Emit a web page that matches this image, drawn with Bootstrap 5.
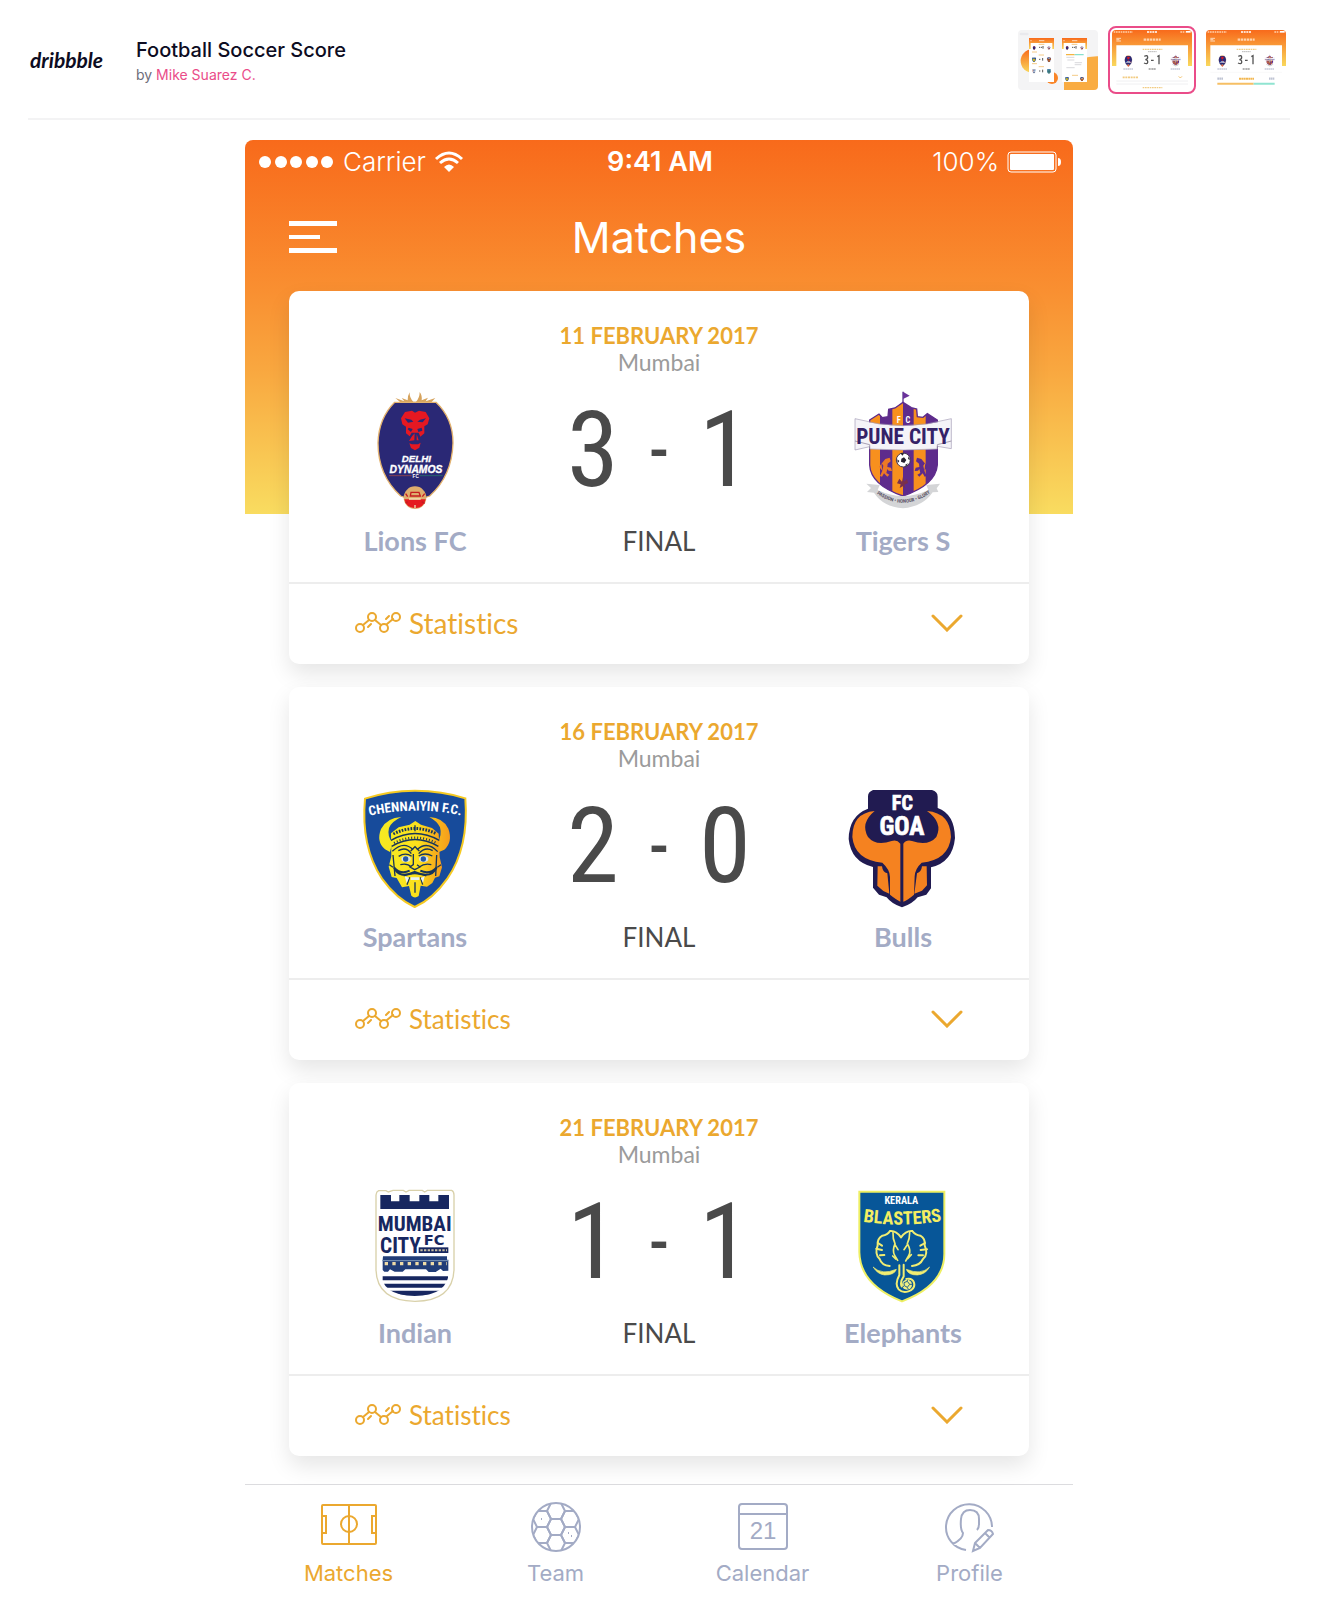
<!DOCTYPE html>
<html lang="en">
<head>
<meta charset="utf-8">
<meta name="viewport" content="width=device-width, initial-scale=1">
<title>Football Soccer Score</title>
<link href="https://cdn.jsdelivr.net/npm/bootstrap@5.3.0/dist/css/bootstrap.min.css" rel="stylesheet">
<style>
  body { font-family: Inter, "Liberation Sans", sans-serif; color: #0d0c22; background: #fff; }
  a { text-decoration: none; }
  .shot-header { margin: 0 28px; padding-top: 2px; height: 120px; border-bottom: 2px solid #f3f3f4; }
  .brand { font: italic 700 21px/24px Lato, sans-serif; color: #0d0c22; width: 108px; padding-left: 2px; }
  .shot-info { padding-top: 4px; }
  .shot-title { font-size: 20px; line-height: 25px; font-weight: 500; }
  .byline { font-size: 14px; line-height: 24px; color: #6e6d7a; }
  .byline a { color: #ea4c89; }
  .thumbs { gap: 6px; }
  .thumb { border: 2px solid transparent; border-radius: 8px; padding: 2px; display: block; }
  .thumb.active { border-color: #ea4c89; }
  .thumb svg { display: block; width: 80px; height: 60px; border-radius: 4px; }
  .phone { max-width: 828px; margin-top: 20px; border-radius: 8px 8px 0 0;
    background: linear-gradient(#f86a1b, #f98f31 40%, #f9a840 62%, #f9dc60) no-repeat 0 0 / 100% 374px; }
  .status { height: 44px; padding: 0 12px 0 14px; font-size: 26px; line-height: 32px; font-weight: 300; }
  .clock { font-weight: 600; font-size: 27px; }
  .side { flex: 1 1 0; }
  .title-bar { height: 107px; padding: 0 44px 2px; }
  .title-bar h1 { font-size: 43px; line-height: 52px; font-weight: 400; }
  .matches { padding: 0 44px 28px; gap: 23px; }
  .match { border: 0; border-radius: 10px; box-shadow: 0 10px 22px rgba(0,0,0,.1); font-family: Lato, sans-serif; }
  .match-head { padding-top: 32px; height: 96px; font-size: 23px; line-height: 26px; color: #9b9b9b; }
  .match-date { color: #eba82f; font-weight: 700; font-size: 22px; }
  .match-body { height: 195px; }
  .crest { width: 114px; height: 127px; display: block; }
  .team { font-size: 27px; line-height: 32px; font-weight: 700; color: #a3abc5; margin-top: 11px; }
  .score { height: 127px; color: #4a4a4a; font: 400 105px/120px "Liberation Sans Narrow", "Roboto Condensed", "Liberation Sans", sans-serif; }
  .score span { width: 66px; text-align: center; }
  .score .dash { font-size: 66px; font-weight: 500; }
  .final { font-size: 26px; line-height: 32px; color: #4a4a4a; margin-top: 11px; }
  .stats { height: 82px; padding: 0 66px 2px; border: 0; border-top: 2px solid #ededed; background: none; color: #eba82f; font-size: 26px; line-height: 32px; font-variant-ligatures: none; }
  .stats.large { font-size: 28px; }
  .tabs { border-top: 1px solid #dcdcdf; padding-top: 16px; }
  .tabs a { color: #a3abc5; font-size: 22px; line-height: 28px; }
  .tabs a.active { color: #eba82f; }
  .tabs svg { width: 56px; height: 52px; margin-bottom: 6px; }
  .ic { fill: none; stroke: currentColor; stroke-width: 2; }
  .lib { font-family: "Liberation Sans", sans-serif; font-weight: 700; }
  .slim { font-family: "Roboto Condensed", "Liberation Sans", sans-serif; font-weight: 700; }
</style>
<script src="https://cdn.jsdelivr.net/npm/bootstrap@5.3.0/dist/js/bootstrap.bundle.min.js"></script>
</head>
<body>
<svg width="0" height="0" class="position-absolute" aria-hidden="true">
  <defs>
    <linearGradient id="sun" x2="0" y2="1"><stop stop-color="#f86a1b"/><stop offset="1" stop-color="#f9d85c"/></linearGradient>
    <linearGradient id="gold"><stop stop-color="#f5ea22"/><stop offset=".55" stop-color="#fbe01c"/><stop offset="1" stop-color="#f59c1c"/></linearGradient>
    <clipPath id="puneClip"><path d="M150 150L178 132 188 143 205 140 207 118 226 114 250 97 275 113 291 117 293 140 310 142 323 131 353 150V285Q348 345 250 378Q153 345 150 285Z"/></clipPath>
    <clipPath id="ballClip"><circle cx="26" cy="26" r="24"/></clipPath>
    <clipPath id="mumClip"><path d="M120 60H328V300Q325 378 224 378Q123 378 120 300Z"/></clipPath>

    <symbol id="lions" viewBox="54 51 342 381">
      <path d="M166 84L193 94 185 84 203 91Q203 76 209 67Q208 84 220 95L228 95Q239 84 239 66Q247 76 245 91L264 83 257 94 286 84 274 97H181Z" fill="#d6a35d"/>
      <path d="M164 97H288Q339 145 339 219Q336 318 269 378Q225 399 182 378Q114 316 114 219Q116 145 164 97Z" fill="#2a2875" stroke="#e4b36f" stroke-width="4"/>
      <path d="M195 126L216 122 225 128 237 122 257 126 268 145 263 163 253 169 253 190 241 200 236 188H215L209 199 198 190 198 170 187 163 183 145Z" fill="#e51822"/>
      <path d="M194 145L214 149 220 155 204 158ZM232 155L240 149 258 145 248 157ZM206 173L218 177 213 186 203 178ZM232 177L245 173 247 182 235 186Z" fill="#2a2875"/>
      <path d="M216 199L224 190 223 211 207 213ZM230 192L236 211 230 211ZM208 220L216 223H234L242 218 238 233 225 241 213 234Z" fill="#e51822"/>
      <text class="lib" x="229" y="277" font-size="29" font-style="italic" fill="#fff" stroke="#fff" text-anchor="middle">DELHI</text>
      <text class="lib" x="228" y="308" font-size="31" font-style="italic" fill="#fff" stroke="#fff" text-anchor="middle">DYNAMOS</text>
      <path d="M147 317H215" stroke="#874052" stroke-width="3"/><path d="M239 317H308" stroke="#28656c" stroke-width="3"/>
      <text class="lib" x="227" y="325" font-size="14" fill="#fff" text-anchor="middle">FC</text>
      <circle cx="225" cy="383" r="34" fill="#dfad6d"/>
      <path d="M193 388H257Q252 414 225 415Q197 412 193 388Z" fill="#e51a20"/>
      <path d="M203 380L197 371M247 380L254 371M211 378L213 367H237L241 378ZM219 367H230M225 404V414M203 395L197 399M245 395L254 400" stroke="#c51d20" stroke-width="4" fill="none"/>
      <path d="M207 387H242M225 405V415" stroke="#f4dfb3" stroke-width="4"/>
    </symbol>

    <symbol id="tigers" viewBox="79 51 342 381">
      <path d="M250 98V65" stroke="#5c3b91" stroke-width="4"/><path d="M250 65L270 77 250 87Z" fill="#6a329b"/>
      <g clip-path="url(#puneClip)"><path d="M145 95H360V390H145Z" fill="#5e2b8c"/><path d="M150 95H181V390H150ZM218 95H250V390H218ZM282 95H318V390H282Z" fill="#f7901e"/></g>
      <path d="M150 150L178 132 188 143 205 140 207 118 226 114 250 97 275 113 291 117 293 140 310 142 323 131 353 150V285Q348 345 250 378Q153 345 150 285Z" fill="none" stroke="#5e2b8c" stroke-width="4"/>
      <text class="slim" x="237" y="158" font-size="25" fill="#fff" text-anchor="middle">F</text>
      <text class="slim" x="265" y="158" font-size="25" fill="#fff" text-anchor="middle">C</text>
      <path d="M106 146Q250 188 395 146V236L353 229V237Q250 243 150 237V230L106 240Z" fill="#f4f3f8" stroke="#a39bb5" stroke-width="2"/>
      <path d="M106 213L150 224V237M395 213L353 224V237" fill="none" stroke="#827591" stroke-width="2"/>
      <text class="slim" x="250" y="222" font-size="64" fill="#342167" text-anchor="middle">PUNE CITY</text>
      <path d="M197 267L210 263 213 274 204 281 203 291 214 293 217 303 207 302 203 297 200 309 209 314 203 320 193 310 187 320 181 318 188 302 191 287 185 278 188 302 178 290Z" fill="#ed7925"/>
      <path d="M305 267L292 263 289 274 298 281 299 291 288 293 285 303 295 302 299 297 302 309 293 314 299 320 309 310 315 320 321 318 314 302 311 287 317 278 314 302 324 290Z" fill="#5e2b8c"/>
      <circle cx="251" cy="270" r="21" fill="#fff" stroke="#45364f" stroke-width="3"/>
      <path d="M245 266L253 262 260 270 254 279 244 275ZM242 249L254 250 248 257ZM267 259L271 270 265 267ZM233 268L239 273 234 280ZM256 285L265 280 260 289Z" fill="#24202f"/>
      <path d="M250 320L253 335 262 327 265 339 254 344 257 355 249 349 240 354 243 343 232 340 239 326 247 335Z" fill="#78304d"/>
      <path d="M140 341L180 345 174 360Q250 396 326 360L320 345 361 341 351 355 356 366 339 367Q310 410 250 415Q190 410 163 368L142 366 154 354Z" fill="#d4d5d7"/>
      <path id="motto" d="M167 368Q250 430 336 366" fill="none"/>
      <text class="slim" font-size="15" fill="#5a5364"><textPath href="#motto" startOffset="50%" text-anchor="middle">PASSION • HONOUR • GLORY</textPath></text>
    </symbol>

    <symbol id="spartans" viewBox="58 39 342 381">
      <path d="M79 86Q150 62 229 62Q310 62 380 85Q391 232 326 326Q282 388 228 411Q173 386 130 326Q66 230 79 86Z" fill="#174b9b" stroke="#f6ca22" stroke-width="6"/>
      <path id="chen" d="M85 139Q228 105 375 138" fill="none"/>
      <text class="slim" font-size="40" fill="#fff"><textPath href="#chen" startOffset="50%" text-anchor="middle">CHENNAIYIN F.C.</textPath></text>
      <path d="M188 141Q145 143 127 177Q112 215 139 238L154 246 161 218Q145 198 151 174Q158 155 188 141ZM272 141Q313 143 329 176Q343 215 317 239L301 246 296 218Q311 197 304 172Q296 154 272 141Z" fill="url(#gold)"/>
      <path d="M157 190L180 172 213 164 230 153 247 164 280 174 300 191 303 262 310 292 302 319 289 323 281 339 265 350 246 347 240 378Q228 387 218 377L211 348 190 352 174 324 159 321 150 290 158 259Z" fill="url(#gold)"/>
      <g fill="none" stroke="#17355b" stroke-width="4">
        <path d="M164 192Q229 159 294 192" stroke-width="9" stroke-dasharray="5 4"/>
        <path d="M157 211Q229 170 302 211M159 229Q229 188 299 229M161 244Q195 211 223 239M235 239Q265 211 297 245"/>
        <path d="M166 219Q229 187 294 219" stroke-width="7" stroke-dasharray="3 6"/>
        <path d="M179 242Q203 229 218 251M240 251Q260 229 282 242M180 259Q201 246 219 259M240 258Q258 246 281 258M163 255L169 318M294 255L291 318M152 284L163 292M307 284L296 292"/>
        <path d="M229 166V184M216 243L229 230 242 243M224 252V284L214 291 228 299 244 291 235 284M185 284Q206 279 218 291M242 291Q257 279 278 284"/>
        <path d="M166 292Q181 328 228 306Q278 328 294 292Q273 315 245 302M213 302Q186 315 166 292" stroke-width="6"/>
        <path d="M195 318Q228 303 263 318M213 322L205 344M245 322L252 344M229 337V368"/>
      </g>
      <ellipse cx="202" cy="267" rx="14" ry="9" fill="#d5e4ed"/><ellipse cx="255" cy="267" rx="14" ry="9" fill="#d5e4ed"/><circle cx="201" cy="267" r="8" fill="#2458a7"/><circle cx="254" cy="267" r="8" fill="#2458a7"/>
      <path d="M198 319L211 323 204 340ZM258 319L246 324 253 338ZM216 322H242V330H216Z" fill="#e7f1f5"/>
    </symbol>

    <symbol id="bulls" viewBox="79 39 342 381">
      <path d="M160 60H337Q354 65 354 80V114Q405 132 406 204Q399 277 334 292V355L320 374 294 382Q278 402 247 412Q216 402 201 382L178 374 160 353V291Q94 275 87 207Q88 137 145 116V79Q145 66 160 60Z" fill="#211b51"/>
      <path d="M165 123Q98 129 98 201Q105 270 188 278Q211 299 211 321V374Q230 389 242 395V221Q232 208 216 213Q169 230 145 201Q121 159 165 123ZM322 123Q392 129 394 201Q387 270 306 278Q286 296 285 319L283 374Q264 390 251 395V221Q260 208 277 213Q325 230 350 201Q371 158 322 123Z" fill="#f58220"/>
      <path d="M174 289H187Q189 308 203 310L209 371 191 363 173 347ZM321 289H307Q305 306 292 310L284 371 307 362 322 346Z" fill="#f58220"/>
      <text class="slim" x="248" y="121" font-size="60" fill="#fff" text-anchor="middle" stroke="#fff" stroke-width="2">FC</text>
      <text class="slim" x="247" y="194" font-size="76" fill="#fff" text-anchor="middle" stroke="#fff" stroke-width="2">GOA</text>
    </symbol>

    <symbol id="indian" viewBox="54 27 342 381">
      <path d="M116 62H138L145 66 159 61H190L198 66 207 61H247L254 66 262 61H335Q342 64 342 75V300Q338 393 225 394Q111 392 108 300V75Q109 65 116 62Z" fill="#fff" stroke="#d9d1aa" stroke-width="4"/>
      <path d="M121 75H153V94H178V75H209V94H238V75H268V94H295V75H327V117H121Z" fill="#172760"/>
      <text class="slim" x="224" y="184" font-size="63" text-anchor="middle" fill="#172760">MUMBAI</text>
      <text class="slim" x="120" y="249" font-size="64" fill="#172760">CITY</text>
      <text x="251" y="224" font-family="DejaVu Sans, sans-serif" font-weight="700" font-size="44" fill="#172760">FC</text>
      <path d="M236 232H325V249H236Z" fill="#172760"/><path d="M241 241H321" stroke="#c7bca0" stroke-width="6" stroke-dasharray="7 4"/>
      <g clip-path="url(#mumClip)"><path d="M129 259H321V269H325V302L309 303 302 296 287 306H266L258 298H196L188 305H164L150 298 144 305H133L128 300V269Z" fill="#213d78"/><path d="M134 281H320" stroke="#efdca7" stroke-width="10" stroke-dasharray="10 13"/><path d="M126 272H325" stroke="#7e9abb" stroke-width="3"/>
      <path d="M128 325H324M132 347H318M145 368H306" stroke="#172760" stroke-width="12"/><path d="M180 374H270" stroke="#172760" stroke-width="8"/></g>
    </symbol>

    <symbol id="elephants" viewBox="79 27 342 381">
      <path d="M119 65H374V247Q377 345 247 394Q121 344 119 247Z" fill="#075698" stroke="#eeef63" stroke-width="6"/>
      <text class="slim" x="245" y="101" font-size="31" fill="#fff" text-anchor="middle">KERALA</text>
      <path id="blast" d="M130 155Q246 173 367 153" fill="none"/>
      <text class="slim" font-size="55" fill="#f5ee62"><textPath href="#blast" startOffset="50%" text-anchor="middle">BLASTERS</textPath></text>
      <g fill="none" stroke="#f1ed72" stroke-width="6" stroke-linecap="round">
        <path d="M244 202Q229 181 211 183Q204 195 188 197Q172 206 174 226Q164 252 180 267Q186 286 210 288M244 202Q259 181 278 183Q286 195 302 197Q318 206 315 226Q327 252 310 267Q301 286 277 288"/>
        <path d="M175 219L187 227M170 236L187 240M181 256L194 255M316 219L302 227M322 238L303 240M310 256L296 256"/>
        <path d="M220 188Q219 207 226 221Q217 243 225 256L234 271M270 188Q270 207 263 221Q276 243 267 257L258 273M226 224L235 239M263 224L253 239M219 258L228 267M275 254L264 266" stroke-width="5"/>
        <path d="M161 292Q187 316 230 298Q225 315 195 315Q174 313 161 292ZM329 292Q304 316 260 298Q265 315 293 315Q318 313 329 292Z" fill="#f1ed72" stroke-width="2"/>
        <path d="M239 286V315Q224 343 237 358Q249 370 266 364Q288 357 283 338Q278 323 260 327M252 284V319Q240 337 246 349"/>
      </g>
      <circle cx="262" cy="344" r="15" fill="#eeee84"/><path d="M253 338L263 334 270 343 263 352 254 347ZM263 334V329M270 343H277M263 352L266 358M254 347L248 352" stroke="#28658d" stroke-width="3" fill="none"/>
    </symbol>

    <symbol id="trend" viewBox="0 0 46 22"><g fill="none" stroke="#eba82f" stroke-width="2" stroke-linecap="round"><circle cx="5" cy="16" r="4"/><circle cx="17" cy="5" r="4"/><circle cx="29" cy="16" r="4"/><circle cx="41" cy="5" r="4"/><path d="M8 13L14 8M20 8L26 13M32 12L38 7M13 15L16 12M31 7L34 4"/></g></symbol>
    <symbol id="chevron" viewBox="0 0 32 18"><path d="M2 2L16 16 30 2" fill="none" stroke="#eba82f" stroke-width="3" stroke-linecap="round"/></symbol>

    <symbol id="miniTop" viewBox="0 0 240 180">
      <path d="M0 0H240V180H0Z" fill="#fff"/><path d="M0 0H240V108H0Z" fill="url(#sun)"/>
      <path d="M5 6H62M205 6H220" stroke="#ffd0a8" stroke-width="4" stroke-dasharray="5 2"/><rect x="222" y="3" width="14" height="5" fill="#fff"/>
      <path d="M105 6H137" stroke="#fff" stroke-width="4" stroke-dasharray="6 2"/>
      <path d="M13 25H27M13 29H22M13 33H27" stroke="#fff" stroke-width="2"/>
      <path d="M95 29H146" stroke="#ffd2ac" stroke-width="7" stroke-dasharray="7 2"/>
      <path d="M13 46H228V180H13Z" fill="#fff"/>
      <path d="M92 58H151" stroke="#f2cc83" stroke-width="4" stroke-dasharray="5 2"/><path d="M108 65H134" stroke="#bbb" stroke-width="3" stroke-dasharray="5 1"/>
      <use href="#lions" x="32" y="73" width="34" height="38"/><use href="#tigers" x="174" y="73" width="34" height="38"/>
      <g fill="none" stroke="#555" stroke-width="4"><path d="M97 79Q107 74 107 82Q107 88 100 89Q108 89 107 97Q106 104 96 99M117 91H125M136 80L141 77V103"/></g>
      <path d="M34 117H64M176 117H204" stroke="#c6cada" stroke-width="4" stroke-dasharray="5 1"/><path d="M110 117H132" stroke="#999" stroke-width="4" stroke-dasharray="4 1"/>
    </symbol>
    <symbol id="miniPhone" viewBox="0 0 75 132"><path d="M0 0H75V132H0Z" fill="#fff"/><path d="M0 0H75V33H0Z" fill="url(#sun)"/><path d="M30 8H46M4 8H8" stroke="#fff" stroke-width="2"/><path d="M5 15H70V132H5Z" fill="#fff"/><path d="M29 19H46" stroke="#efaa44" stroke-width="2"/><use href="#lions" x="9" y="23" width="13" height="14"/><use href="#tigers" x="53" y="23" width="13" height="14"/><path d="M30 28H34M36 28H39M42 24V32" stroke="#555" stroke-width="3"/></symbol>
  </defs>
</svg>

<header class="shot-header d-flex align-items-center justify-content-between">
  <div class="d-flex align-items-center">
    <a href="#" class="brand">dribbble</a>
    <div class="shot-info">
      <div class="shot-title">Football Soccer Score</div>
      <div class="byline">by <a href="#">Mike Suarez C.</a></div>
    </div>
  </div>
  <nav class="thumbs d-flex" aria-label="Shots">
    <a href="#" class="thumb" aria-label="Overview"><svg viewBox="0 0 240 180">
      <path d="M0 0H240V180H0Z" fill="#f4f4f5"/><circle cx="43" cy="93" r="35" fill="url(#sun)"/><circle cx="102" cy="144" r="18" fill="#f98528"/><path d="M138 180V110Q190 78 240 79V180Z" fill="#f9ac42"/><path d="M9 12H28" stroke="#e9e9ed" stroke-width="8" stroke-linecap="round"/>
      <use href="#miniPhone" x="33" y="24" width="75" height="132"/><use href="#miniPhone" x="132" y="24" width="75" height="132"/>
      <use href="#spartans" x="41" y="81" width="14" height="16"/><use href="#bulls" x="86" y="81" width="14" height="16"/><use href="#indian" x="41" y="116" width="14" height="16"/><use href="#elephants" x="86" y="116" width="14" height="16"/>
      <path d="M63 88H67M74 84V92M63 123H67M74 119V127" stroke="#555" stroke-width="3"/><path d="M62 75H78M62 110H78M42 66H57M42 101H57M162 136H180" stroke="#efb14c" stroke-width="2"/>
      <path d="M144 74H170" stroke="#f4b440" stroke-width="4"/><path d="M170 74H197" stroke="#88e0cd" stroke-width="4"/><path d="M145 82H169M148 90H169M170 98H192M170 104H190M145 113H170" stroke="#c6c6cb" stroke-width="2"/>
      <use href="#spartans" x="140" y="140" width="14" height="14"/><use href="#bulls" x="185" y="140" width="14" height="14"/>
    </svg></a>
    <a href="#" class="thumb active" aria-label="Matches list"><svg viewBox="0 0 240 180"><use href="#miniTop"/><path d="M13 153H228M13 162H228" stroke="#e9e9eb" stroke-width="2"/><path d="M32 142H80" stroke="#f2cc83" stroke-width="5" stroke-dasharray="6 2"/><path d="M200 139L205 144 210 139" fill="none" stroke="#eba82f" stroke-width="2"/><path d="M92 173H151" stroke="#f2cc83" stroke-width="4" stroke-dasharray="5 2"/></svg></a>
    <a href="#" class="thumb" aria-label="Match statistics"><svg viewBox="0 0 240 180"><use href="#miniTop"/><path d="M13 127H228" stroke="#ededed"/><path d="M34 146H52M189 146H205" stroke="#bfc4d3" stroke-width="7" stroke-dasharray="5 1"/><path d="M99 146H144" stroke="#f2b750" stroke-width="6" stroke-dasharray="6 1"/><path d="M34 161H143" stroke="#f6bf64" stroke-width="6"/><path d="M143 161H206" stroke="#90e4d1" stroke-width="6"/></svg></a>
  </nav>
</header>

<main class="phone w-100 mx-auto">
  <div class="status d-flex align-items-center text-white">
    <div class="side d-flex align-items-center">
      <svg width="76" height="14" class="me-2" fill="#fff"><circle cx="6" cy="7" r="6"/><circle cx="22" cy="7" r="6"/><circle cx="37" cy="7" r="6"/><circle cx="53" cy="7" r="6"/><circle cx="68" cy="7" r="6"/></svg>
      <span>Carrier</span>
      <svg width="30" height="22" viewBox="0 0 30 22" class="ms-2" fill="none" stroke="#fff" stroke-width="3"><path d="M2 8Q15-4 28 8M6 12Q15 4 24 12"/><path d="M10 16Q15 11 20 16L15 21Z" fill="#fff" stroke="none"/></svg>
    </div>
    <div class="clock">9:41 AM</div>
    <div class="side d-flex align-items-center justify-content-end"><span>100%</span>
      <svg width="54" height="22" viewBox="0 0 54 22" class="ms-2"><rect x="1" y="1" width="48" height="20" rx="3" fill="none" stroke="#fff" stroke-width="1"/><rect x="3" y="3" width="44" height="16" rx="1" fill="#fff"/><path d="M51 7Q54 7 54 11T51 15Z" fill="#fff"/></svg>
    </div>
  </div>
  <div class="title-bar d-flex align-items-center text-white">
    <div class="side"><button type="button" class="btn p-0 border-0 d-flex" aria-label="Menu"><svg width="48" height="32" fill="#fff"><path d="M0 0H48V5H0ZM0 14H31V18H0ZM0 27H48V32H0Z"/></svg></button></div>
    <h1 class="m-0">Matches</h1>
    <div class="side"></div>
  </div>

  <div class="matches d-flex flex-column">
    <article class="match card">
      <div class="match-head text-center"><div class="match-date">11 FEBRUARY 2017</div><div>Mumbai</div></div>
      <div class="match-body row g-0 px-1 text-center">
        <div class="col-4"><svg class="crest mx-auto"><use href="#lions"/></svg><div class="team">Lions FC</div></div>
        <div class="col-4"><div class="score d-flex justify-content-center align-items-center"><span>3</span><span class="dash">-</span><span>1</span></div><div class="final">FINAL</div></div>
        <div class="col-4"><svg class="crest mx-auto"><use href="#tigers"/></svg><div class="team">Tigers S</div></div>
      </div>
      <button type="button" class="stats large d-flex align-items-center w-100"><svg width="46" height="22" class="me-2"><use href="#trend"/></svg>Statistics<svg width="32" height="18" class="ms-auto"><use href="#chevron"/></svg></button>
    </article>
    <article class="match card">
      <div class="match-head text-center"><div class="match-date">16 FEBRUARY 2017</div><div>Mumbai</div></div>
      <div class="match-body row g-0 px-1 text-center">
        <div class="col-4"><svg class="crest mx-auto"><use href="#spartans"/></svg><div class="team">Spartans</div></div>
        <div class="col-4"><div class="score d-flex justify-content-center align-items-center"><span>2</span><span class="dash">-</span><span>0</span></div><div class="final">FINAL</div></div>
        <div class="col-4"><svg class="crest mx-auto"><use href="#bulls"/></svg><div class="team">Bulls</div></div>
      </div>
      <button type="button" class="stats d-flex align-items-center w-100"><svg width="46" height="22" class="me-2"><use href="#trend"/></svg>Statistics<svg width="32" height="18" class="ms-auto"><use href="#chevron"/></svg></button>
    </article>
    <article class="match card">
      <div class="match-head text-center"><div class="match-date">21 FEBRUARY 2017</div><div>Mumbai</div></div>
      <div class="match-body row g-0 px-1 text-center">
        <div class="col-4"><svg class="crest mx-auto"><use href="#indian"/></svg><div class="team">Indian</div></div>
        <div class="col-4"><div class="score d-flex justify-content-center align-items-center"><span>1</span><span class="dash">-</span><span>1</span></div><div class="final">FINAL</div></div>
        <div class="col-4"><svg class="crest mx-auto"><use href="#elephants"/></svg><div class="team">Elephants</div></div>
      </div>
      <button type="button" class="stats d-flex align-items-center w-100"><svg width="46" height="22" class="me-2"><use href="#trend"/></svg>Statistics<svg width="32" height="18" class="ms-auto"><use href="#chevron"/></svg></button>
    </article>
  </div>

  <nav class="tabs row g-0 text-center" aria-label="Main">
    <a href="#" class="col-3 d-flex flex-column align-items-center active"><svg viewBox="0 0 56 52" class="ic"><rect x="1" y="4" width="54" height="39" rx="1"/><path d="M28 4V43M1 15H5V32H1M55 15H51V32H55"/><circle cx="28" cy="23" r="8"/></svg>Matches</a>
    <a href="#" class="col-3 d-flex flex-column align-items-center"><svg viewBox="-2 0 56 52" class="ic"><circle cx="26" cy="26" r="24"/><g clip-path="url(#ballClip)"><path id="hex" d="M17 26L21 18H31L35 26 31 34H21Z"/><use href="#hex" y="16"/><use href="#hex" y="-16"/><use href="#hex" x="14" y="8"/><use href="#hex" x="14" y="-8"/><use href="#hex" x="-14" y="8"/><use href="#hex" x="-14" y="-8"/></g><path d="M11 18h1M38 32h1M41 35h1"/></svg>Team</a>
    <a href="#" class="col-3 d-flex flex-column align-items-center"><svg viewBox="0 0 56 52" class="ic"><rect x="4" y="3" width="48" height="45" rx="3"/><path d="M4 13H52"/><text x="28" y="38" text-anchor="middle" font-family="Liberation Sans, sans-serif" font-size="24" fill="currentColor" stroke="none">21</text></svg>Calendar</a>
    <a href="#" class="col-3 d-flex flex-column align-items-center"><svg viewBox="0 0 56 52" class="ic"><path d="M24 49A23 23 0 1 1 50 26M11 43Q21 38 21 32Q18 28 19 18Q20 9 28 9Q37 9 37 18V23Q37 27 35 29M31 50L33 42 46 29Q50 29 51 33L38 47ZM33 42L38 47M43 32L48 37"/></svg>Profile</a>
  </nav>
</main>
</body>
</html>
